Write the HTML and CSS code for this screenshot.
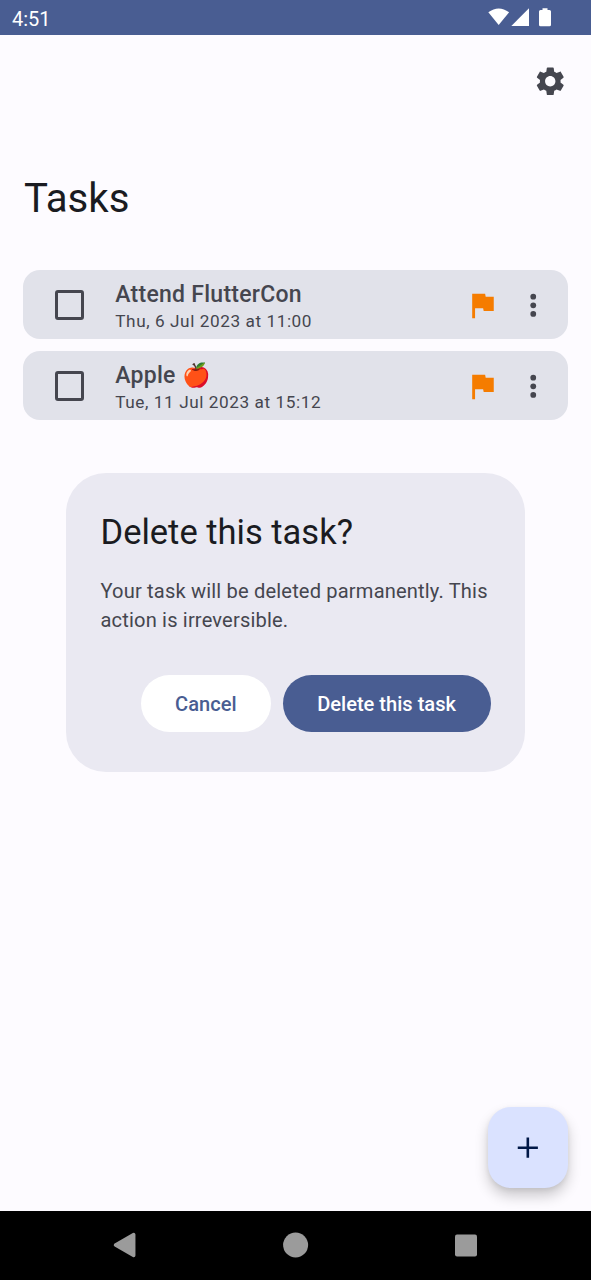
FILE: index.html
```
<!DOCTYPE html>
<html lang="en">
<head>
<meta charset="utf-8">
<title>Tasks</title>
<link rel="stylesheet" href="styles.css">
</head>
<body>
<div class="screen">
  <header class="status-bar">
    <span class="clock">4:51</span>
    <svg class="status-icons" width="64" height="20" viewBox="0 0 64 20">
      <path d="M.3 4.300Q10.700-3.500 21.100 4.300L10.700 17Z"/>
      <path d="M41 .3V18H23.300Z"/>
      <path d="M54.500 0h5v1.700h2q1.500 0 1.500 1.500v13.300q0 1.500-1.500 1.500h-9q-1.500 0-1.500-1.500v-13.300q0-1.500 1.500-1.500h2z" transform="translate(0 .2)"/>
    </svg>
  </header>
  <main class="content">
    <div class="app-bar">
      <svg class="icon" viewBox="0 0 24 24"><path d="M19.140 12.940c.040-.300.060-.610.060-.940 0-.320-.020-.640-.070-.940l2.030-1.580c.180-.140.230-.410.120-.610l-1.920-3.320c-.120-.220-.370-.290-.590-.220l-2.390.960c-.500-.380-1.030-.700-1.620-.940l-.360-2.540c-.040-.240-.240-.410-.480-.410h-3.840c-.240 0-.430.170-.470.410l-.360 2.540c-.590.240-1.130.570-1.620.940l-2.390-.960c-.220-.080-.470 0-.590.220L2.740 8.870c-.120.210-.080.470.120.610l2.030 1.580c-.050.300-.090.630-.090.940s.020.640.070.940l-2.030 1.580c-.180.140-.230.410-.120.610l1.920 3.320c.120.220.370.290.590.220l2.390-.960c.500.380 1.030.700 1.620.940l.360 2.540c.050.240.240.410.480.410h3.840c.240 0 .440-.170.470-.410l.360-2.540c.590-.240 1.130-.560 1.620-.940l2.390.960c.220.080.470 0 .590-.220l1.920-3.320c.120-.220.070-.470-.120-.610l-2.010-1.580zM12 15.600c-1.980 0-3.600-1.620-3.600-3.600s1.620-3.600 3.600-3.600 3.600 1.620 3.600 3.600-1.620 3.600-3.600 3.600z"/></svg>
    </div>
    <h1 class="page-title">Tasks</h1>
    <ul class="task-list">
      <li class="task">
        <span class="checkbox"></span>
        <div class="task-text">
          <div class="task-name">Attend FlutterCon</div>
          <div class="task-date">Thu, 6 Jul 2023 at 11:00</div>
        </div>
        <svg class="icon flag" viewBox="0 0 24 24"><path d="M14.400 6L14 4H5v17h2v-7h5.600l.400 2h7V6z"/></svg>
        <svg class="icon" viewBox="0 0 24 24"><circle cx="12" cy="6" r="2"/><circle cx="12" cy="12" r="2"/><circle cx="12" cy="18" r="2"/></svg>
      </li>
      <li class="task">
        <span class="checkbox"></span>
        <div class="task-text">
          <div class="task-name">Apple 🍎</div>
          <div class="task-date">Tue, 11 Jul 2023 at 15:12</div>
        </div>
        <svg class="icon flag" viewBox="0 0 24 24"><path d="M14.400 6L14 4H5v17h2v-7h5.600l.400 2h7V6z"/></svg>
        <svg class="icon" viewBox="0 0 24 24"><circle cx="12" cy="6" r="2"/><circle cx="12" cy="12" r="2"/><circle cx="12" cy="18" r="2"/></svg>
      </li>
    </ul>
  </main>
  <nav class="nav-bar">
    <svg width="24" height="28" viewBox="0 0 24 28"><path d="M2.500 14L20.700 3.500V24.500Z" stroke="#9b9b9b" stroke-width="3.500" stroke-linejoin="round"/></svg>
    <svg width="26" height="26" viewBox="0 0 26 26"><circle cx="12.600" cy="13" r="12.500"/></svg>
    <svg width="24" height="24" viewBox="0 0 24 24"><rect x="1" y="1.500" width="22" height="22" rx="2"/></svg>
  </nav>
  <section class="dialog">
    <h2 class="dialog-title">Delete this task?</h2>
    <p class="dialog-body">Your task will be deleted parmanently. This action is irreversible.</p>
    <div class="dialog-actions">
      <button class="button button-light">Cancel</button>
      <button class="button button-primary">Delete this task</button>
    </div>
  </section>
  <button class="fab" aria-label="Add task"><svg class="icon" viewBox="0 0 24 24"><path d="M18.700 13.200h-6.100v6.100h-1.800v-6.100H4.700v-1.800h6.100V5.300h1.800v6.100h6.100z"/></svg></button>
</div>
</body>
</html>
```
FILE: styles.css
```
* { box-sizing: border-box; margin: 0; padding: 0; }
body { font-family: Roboto, sans-serif; background: #fdfbff; }
svg { display: block; flex: none; }
.screen {
  position: relative;
  width: 591px;
  height: 1280px;
  display: flex;
  flex-direction: column;
  background: #fdfbff;
  overflow: hidden;
}
.status-bar {
  height: 34.5px;
  flex: none;
  display: flex;
  justify-content: space-between;
  align-items: center;
  padding: 2px 39.500px 0 12px;
  background: #495d92;
  color: #fff;
}
.clock { font-size: 20px; line-height: 24px; padding-top: 1px; }
.status-icons { fill: #fff; }
.content { flex: 1; }
.icon { width: 34.500px; height: 34.500px; fill: #45464f; }
.app-bar { display: flex; justify-content: flex-end; padding: 29px 23.500px 0 0; }
.page-title {
  font-size: 40.200px;
  line-height: 52px;
  font-weight: 400;
  color: #1a1b21;
  padding: 75px 0 0 24px;
}
.task-list {
  list-style: none;
  display: flex;
  flex-direction: column;
  gap: 12px;
  padding: 45px 23.300px 0;
}
.task {
  height: 69px;
  display: flex;
  align-items: center;
  padding: 1px 17px 0 31.500px;
  border-radius: 17px;
  background: #e1e2ea;
}
.checkbox { width: 29.500px; height: 29.500px; border: 3px solid #45464f; border-radius: 3px; flex: none; }
.task-text { flex: 1; padding: 3px 0 0 31px; color: #45464f; }
.task-name { font-size: 23px; line-height: 28px; font-weight: 500; letter-spacing: .26px; }
.task-date { font-size: 17.200px; line-height: 24px; letter-spacing: .57px; }
.flag { fill: #f57c00; margin-right: 17px; }
.nav-bar {
  height: 69px;
  flex: none;
  display: flex;
  justify-content: space-between;
  align-items: center;
  padding: 0 113px 1px;
  background: #000;
  fill: #9b9b9b;
}
.dialog {
  position: absolute;
  left: 66px;
  top: 473px;
  width: 459px;
  height: 299px;
  padding: 34.500px;
  border-radius: 40px;
  background: #eae9f2;
}
.dialog-title { font-size: 34.500px; line-height: 46px; font-weight: 400; color: #1a1b21; padding-top: 1.500px; }
.dialog-body { font-size: 20.100px; line-height: 29px; letter-spacing: .165px; color: #45464f; padding-top: 22px; }
.dialog-actions { display: flex; justify-content: flex-end; gap: 11.500px; padding-top: 39.500px; }
.button {
  height: 57.500px;
  padding: 1px 34.500px 0;
  border: 0;
  border-radius: 29px;
  font: 500 20.100px/28px Roboto, sans-serif;
  white-space: nowrap;
}
.button-light { background: #fff; color: #495d92; }
.button-primary { background: #495d92; color: #fff; }
.fab {
  position: absolute;
  left: 487.500px;
  top: 1107.300px;
  width: 80.500px;
  height: 80.500px;
  display: flex;
  align-items: center;
  justify-content: center;
  border: 0;
  border-radius: 23px;
  background: #dae2ff;
  box-shadow: 0 8px 14px rgba(0, 0, 0, .2), 0 2px 5px rgba(0, 0, 0, .07);
}
.fab .icon { fill: #001847; }
```
